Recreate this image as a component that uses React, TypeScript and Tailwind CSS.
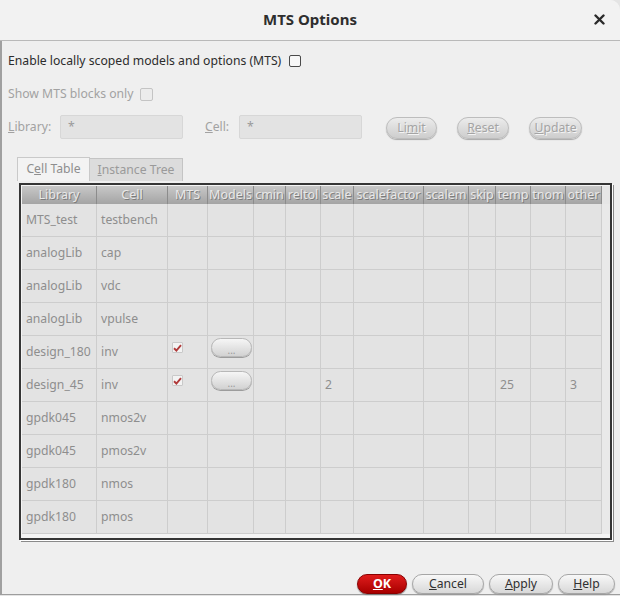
import React from "react";

type Row = {
  lib: string;
  cell: string;
  mts?: boolean;
  scale?: string;
  temp?: string;
  other?: string;
};

const rows: Row[] = [
  { lib: "MTS_test", cell: "testbench" },
  { lib: "analogLib", cell: "cap" },
  { lib: "analogLib", cell: "vdc" },
  { lib: "analogLib", cell: "vpulse" },
  { lib: "design_180", cell: "inv", mts: true },
  { lib: "design_45", cell: "inv", mts: true, scale: "2", temp: "25", other: "3" },
  { lib: "gpdk045", cell: "nmos2v" },
  { lib: "gpdk045", cell: "pmos2v" },
  { lib: "gpdk180", cell: "nmos" },
  { lib: "gpdk180", cell: "pmos" },
];

const headers = [
  "Library",
  "Cell",
  "MTS",
  "Models",
  "cmin",
  "reltol",
  "scale",
  "scalefactor",
  "scalem",
  "skip",
  "temp",
  "tnom",
  "other",
];

const GRID =
  "grid grid-cols-[75px_71px_40px_46px_32px_35px_33px_70px_45px_27px_35px_35px_36px_8px]";

function Check() {
  return (
    <div className="w-[11px] h-[11px] border border-[#c9c9c9] bg-[#f3f3f3] rounded-[1px] flex items-center justify-center">
      <svg width="9" height="8" viewBox="0 0 9 8">
        <path d="M1 4.2 L3.4 6.5 L8 1.2" fill="none" stroke="#b03a3a" strokeWidth="1.9" />
      </svg>
    </div>
  );
}

function DotsButton() {
  return (
    <div className="w-[41px] h-[19px] rounded-full border border-[#b8b8b8] bg-linear-to-b from-[#f6f6f6] to-[#d2d2d2] flex items-end justify-center pb-[1px] text-[10px] leading-none text-[#9a9a9a] shadow-[0_1px_0_#9c9c9c]">
      ...
    </div>
  );
}

function Cell({ children }: { children?: React.ReactNode }) {
  return (
    <div className="h-[33px] border-r border-b border-[#cdcdcd] bg-[#e3e3e3] text-[12.2px] text-[#8e8e8e] overflow-hidden whitespace-nowrap flex items-center pl-[4px]">
      {children}
    </div>
  );
}

function DisabledBtn({ w, children }: { w: string; children: React.ReactNode }) {
  return (
    <div
      className={`${w} h-[22px] rounded-full border border-[#bdbdbd] bg-linear-to-b from-[#ececec] to-[#cdcdcd] shadow-[0_1px_1px_#a8a8a8] flex items-center justify-center text-[12.2px] text-[#a4a4a4] [text-shadow:1px_1px_0_#f4f4f4]`}
    >
      {children}
    </div>
  );
}

function Btn({ w, children }: { w: string; children: React.ReactNode }) {
  return (
    <div
      className={`${w} h-[20px] rounded-full border border-[#a6a6a6] bg-linear-to-b from-[#f8f8f8] to-[#d8d8d8] shadow-[0_1px_1px_#9a9a9a] flex items-center justify-center text-[12.2px] text-[#303030]`}
    >
      {children}
    </div>
  );
}

export default function App() {
  return (
    <div
      className="w-[620px] h-[596px] bg-[#e4e4e4] overflow-hidden"
      style={{ fontFamily: '"Noto Sans", "DejaVu Sans", sans-serif' }}
    >
      <div className="w-[620px] h-[595px] bg-[#efefef] rounded-tr-[10px] flex flex-col border-b border-[#9d9d9d]">
        {/* Title bar */}
        <div className="relative h-[41px] shrink-0 bg-[#f2f2f2] rounded-tr-[10px] border-b border-[#b9b9b9] flex items-center justify-center">
          <div className="text-[15px] font-bold text-[#2e2e2e] mt-[-1px]">MTS Options</div>
          <div className="absolute right-[15px] top-[14px]">
            <svg width="11" height="11" viewBox="0 0 11 11">
              <path d="M1.5 1.5 L9.5 9.5 M9.5 1.5 L1.5 9.5" stroke="#2a2a2a" strokeWidth="2.4" strokeLinecap="round" />
            </svg>
          </div>
        </div>

        {/* Body */}
        <div className="flex-1 flex flex-col border-l-2 border-[#a0a0a0] pl-[6px]">
          <div className="mt-[8px] h-[24px] flex items-center gap-[8px] text-[12.2px] text-[#2c2c2c]">
            <span>Enable locally scoped models and options (MTS)</span>
            <div className="w-[12px] h-[12px] rounded-[2px] border border-[#4a4a4a] bg-[#f7f7f7]" />
          </div>

          <div className="mt-[9px] h-[24px] flex items-center gap-[7px] text-[12.2px] text-[#a2a2a2]">
            <span>Show MTS blocks only</span>
            <div className="w-[13px] h-[13px] rounded-[2px] border border-[#c4c4c4] bg-[#ececec]" />
          </div>

          <div className="mt-[9px] h-[24px] flex items-center text-[12.2px] text-[#a2a2a2]">
            <span className="w-[52px]">
              <span className="underline">L</span>ibrary:
            </span>
            <div className="w-[123px] h-[24px] bg-[#e3e3e3] border border-[#d7d7d7] rounded-[2px] pl-[7px] text-[#9a9a9a] flex items-start pt-[2px]">
              *
            </div>
            <span className="ml-[22px] w-[34px]">
              <span className="underline">C</span>ell:
            </span>
            <div className="w-[123px] h-[24px] bg-[#e3e3e3] border border-[#d7d7d7] rounded-[2px] pl-[7px] text-[#9a9a9a] flex items-start pt-[2px]">
              *
            </div>
            <div className="ml-[24px] flex gap-[20px] mt-[2px]">
              <DisabledBtn w="w-[51px]">
                <span>
                  Li<span className="underline">m</span>it
                </span>
              </DisabledBtn>
              <DisabledBtn w="w-[52px]">
                <span>
                  <span className="underline">R</span>eset
                </span>
              </DisabledBtn>
              <DisabledBtn w="w-[53px]">
                <span>
                  <span className="underline">U</span>pdate
                </span>
              </DisabledBtn>
            </div>
          </div>

          {/* Tabs */}
          <div className="mt-[18px] ml-[9px] h-[24px] flex items-end">
            <div className="w-[73px] h-[24px] bg-[#f3f3f3] border border-b-0 border-[#c9c9c9] flex items-center justify-center text-[12.2px] text-[#8e8e8e]">
              <span>
                C<span className="underline">e</span>ll Table
              </span>
            </div>
            <div className="w-[93px] h-[23px] bg-[#dcdcdc] border border-b-0 border-l-0 border-[#c4c4c4] flex items-center justify-center text-[12.2px] text-[#9a9a9a]">
              <span>
                <span className="underline">I</span>nstance Tree
              </span>
            </div>
          </div>

          {/* Table frame */}
          <div className="mt-[2px] ml-[11px] w-[593px] h-[357px] border-2 border-[#353535] bg-[#f4f4f4] pl-[1px] pt-[1px] shadow-[1px_1px_0_#ffffff,2px_2px_0_#8a8a8a]">
            <div className={`${GRID} h-[18px]`}>
              {headers.map((h) => (
                <div
                  key={h}
                  className="h-[18px] bg-linear-to-b from-[#c8c8c8] to-[#a4a4a4] border-r border-[#8c8c8c] overflow-hidden whitespace-nowrap flex items-center justify-center text-[12.5px] text-[#e8e8e8] [text-shadow:1px_1px_0_#7c7c7c]"
                >
                  {h}
                </div>
              ))}
              <div className="h-[18px] bg-[#e6e6e6]" />
            </div>
            {rows.map((r, i) => (
              <div key={i} className={GRID}>
                <Cell>{r.lib}</Cell>
                <Cell>{r.cell}</Cell>
                <div className="h-[33px] border-r border-b border-[#cdcdcd] bg-[#e3e3e3] pl-[4px] pt-[6px]">
                  {r.mts && <Check />}
                </div>
                <div className="h-[33px] border-r border-b border-[#cdcdcd] bg-[#e3e3e3] pl-[3px] pt-[2px]">
                  {r.mts && <DotsButton />}
                </div>
                <Cell />
                <Cell />
                <Cell>{r.scale}</Cell>
                <Cell />
                <Cell />
                <Cell />
                <Cell>{r.temp}</Cell>
                <Cell />
                <Cell>{r.other}</Cell>
                <div className="h-[33px] bg-[#e9e9e9]" />
              </div>
            ))}
          </div>

          {/* Bottom buttons */}
          <div className="mt-[34px] flex justify-end gap-[5px] pr-[5px]">
            <div className="w-[50px] h-[20px] rounded-full border border-[#8a0000] bg-linear-to-b from-[#e01b1b] to-[#a80000] shadow-[0_1px_1px_#7a7a7a] flex items-center justify-center text-[12.5px] font-bold text-white">
              <span>
                <span className="underline">O</span>K
              </span>
            </div>
            <Btn w="w-[72px]">
              <span>
                <span className="underline">C</span>ancel
              </span>
            </Btn>
            <Btn w="w-[64px]">
              <span>
                <span className="underline">A</span>pply
              </span>
            </Btn>
            <Btn w="w-[57px]">
              <span>
                <span className="underline">H</span>elp
              </span>
            </Btn>
          </div>
        </div>
      </div>
    </div>
  );
}
